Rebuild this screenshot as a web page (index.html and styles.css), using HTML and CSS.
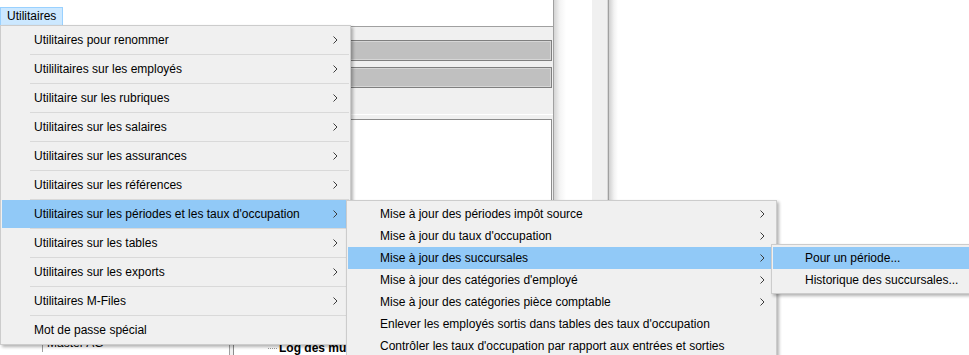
FILE: index.html
```html
<!DOCTYPE html>
<html lang="fr">
<head>
    <meta charset="UTF-8">
    <meta name="viewport" content="width=device-width, initial-scale=1.0">
    <title>Salaires - Utilitaires</title>
    <link rel="stylesheet" href="styles.css">
</head>
<body>
    <div class="app">
        <div class="main-pane">
            <div class="menubar">
                <span class="menubar-item active">Utilitaires</span>
            </div>
            <div class="workspace">
                <div class="company-list">
                    <div class="company-row">
                        <span class="col-code"></span>
                        <span class="col-name">Master AG</span>
                    </div>
                </div>
                <div class="details">
                    <div class="fields">
                        <div class="field"></div>
                        <div class="field"></div>
                    </div>
                    <div class="tree">
                        <div class="tree-node">Log des mutations</div>
                    </div>
                </div>
            </div>
        </div>
        <div class="splitter">
            <div class="splitter-gap"></div>
            <div class="splitter-track"></div>
        </div>
        <div class="right-pane"></div>
    </div>

    <!-- Menu Utilitaires -->
    <div class="menu menu-main">
        <div class="menu-item">Utilitaires pour renommer<svg class="chevron" width="5" height="8" viewBox="0 0 5 8"><path d="M0.5 0.5 L4 4 L0.5 7.5"/></svg></div>
        <div class="menu-sep"></div>
        <div class="menu-item">Utililitaires sur les employés<svg class="chevron" width="5" height="8" viewBox="0 0 5 8"><path d="M0.5 0.5 L4 4 L0.5 7.5"/></svg></div>
        <div class="menu-sep"></div>
        <div class="menu-item">Utilitaire sur les rubriques<svg class="chevron" width="5" height="8" viewBox="0 0 5 8"><path d="M0.5 0.5 L4 4 L0.5 7.5"/></svg></div>
        <div class="menu-sep"></div>
        <div class="menu-item">Utilitaires sur les salaires<svg class="chevron" width="5" height="8" viewBox="0 0 5 8"><path d="M0.5 0.5 L4 4 L0.5 7.5"/></svg></div>
        <div class="menu-sep"></div>
        <div class="menu-item">Utilitaires sur les assurances<svg class="chevron" width="5" height="8" viewBox="0 0 5 8"><path d="M0.5 0.5 L4 4 L0.5 7.5"/></svg></div>
        <div class="menu-sep"></div>
        <div class="menu-item">Utilitaires sur les références<svg class="chevron" width="5" height="8" viewBox="0 0 5 8"><path d="M0.5 0.5 L4 4 L0.5 7.5"/></svg></div>
        <div class="menu-sep"></div>
        <div class="menu-item selected">Utilitaires sur les périodes et les taux d'occupation<svg class="chevron" width="5" height="8" viewBox="0 0 5 8"><path d="M0.5 0.5 L4 4 L0.5 7.5"/></svg></div>
        <div class="menu-sep"></div>
        <div class="menu-item">Utilitaires sur les tables<svg class="chevron" width="5" height="8" viewBox="0 0 5 8"><path d="M0.5 0.5 L4 4 L0.5 7.5"/></svg></div>
        <div class="menu-sep"></div>
        <div class="menu-item">Utilitaires sur les exports<svg class="chevron" width="5" height="8" viewBox="0 0 5 8"><path d="M0.5 0.5 L4 4 L0.5 7.5"/></svg></div>
        <div class="menu-sep"></div>
        <div class="menu-item">Utilitaires M-Files<svg class="chevron" width="5" height="8" viewBox="0 0 5 8"><path d="M0.5 0.5 L4 4 L0.5 7.5"/></svg></div>
        <div class="menu-sep"></div>
        <div class="menu-item">Mot de passe spécial</div>
    </div>

    <!-- Sous-menu périodes et taux d'occupation -->
    <div class="menu menu-sub">
        <div class="menu-item">Mise à jour des périodes impôt source<svg class="chevron" width="5" height="8" viewBox="0 0 5 8"><path d="M0.5 0.5 L4 4 L0.5 7.5"/></svg></div>
        <div class="menu-item">Mise à jour du taux d'occupation<svg class="chevron" width="5" height="8" viewBox="0 0 5 8"><path d="M0.5 0.5 L4 4 L0.5 7.5"/></svg></div>
        <div class="menu-item selected">Mise à jour des succursales<svg class="chevron" width="5" height="8" viewBox="0 0 5 8"><path d="M0.5 0.5 L4 4 L0.5 7.5"/></svg></div>
        <div class="menu-item">Mise à jour des catégories d'employé<svg class="chevron" width="5" height="8" viewBox="0 0 5 8"><path d="M0.5 0.5 L4 4 L0.5 7.5"/></svg></div>
        <div class="menu-item">Mise à jour des catégories pièce comptable<svg class="chevron" width="5" height="8" viewBox="0 0 5 8"><path d="M0.5 0.5 L4 4 L0.5 7.5"/></svg></div>
        <div class="menu-item">Enlever les employés sortis dans tables des taux d'occupation</div>
        <div class="menu-item">Contrôler les taux d'occupation par rapport aux entrées et sorties</div>
    </div>

    <!-- Sous-menu succursales -->
    <div class="menu menu-sub2">
        <div class="menu-item selected">Pour un période...</div>
        <div class="menu-item">Historique des succursales...</div>
    </div>
</body>
</html>
```

FILE: styles.css
```css
body {
    margin: 0;
    width: 969px;
    height: 355px;
    overflow: hidden;
    position: relative;
    background-color: #fff;
    font-family: "Liberation Sans", Arial, sans-serif;
    font-size: 12px;
    color: #000;
}

/* fenêtre en arrière-plan */
.app {
    display: flex;
    height: 355px;
}
.main-pane {
    width: 553px;
    border-right: 1px solid #a0a0a0;
    display: flex;
    flex-direction: column;
}
.menubar {
    height: 20px;
    padding-top: 7px;
    border-bottom: 1px solid #a0a0a0;
    background-color: #fff;
}
.menubar-item {
    display: inline-block;
    height: 17px;
    line-height: 17px;
    padding: 0 6px;
    border: 1px solid transparent;
}
.menubar-item.active {
    background-color: #cce8ff;
    border-color: #99d1ff;
}
.workspace {
    flex: 1;
    display: flex;
}
.company-list {
    width: 229px;
    border-right: 1px solid #a0a0a0;
    background-color: #fff;
    display: flex;
    flex-direction: column;
    justify-content: flex-end;
    padding-bottom: 4px;
}
.company-row {
    display: flex;
    height: 17px;
    line-height: 17px;
}
.col-code {
    width: 42px;
    border-right: 1px solid #a0a0a0;
}
.col-name {
    padding-left: 4px;
}
.details {
    flex: 1;
    background-color: #f0f0f0;
    display: flex;
    flex-direction: column;
}
.fields {
    height: 74px;
    padding: 13px 1px 0 3px;
    border-bottom: 1px solid #fff;
    display: flex;
    flex-direction: column;
    gap: 6px;
}
.field {
    height: 19px;
    background-color: #c0c0c0;
    border: 1px solid #7f7f7f;
    box-shadow: inset 0 0 0 1px #d6d6d6;
}
.tree {
    flex: 1;
    margin: 4px 1px 0 3px;
    background-color: #fff;
    border: 1px solid #8c8c8c;
    border-bottom: none;
    padding-top: 220px;
}
.tree-node {
    display: flex;
    align-items: center;
    height: 16px;
    margin-left: 34px;
    font-weight: bold;
}
.tree-node::before {
    content: "";
    width: 9px;
    margin-right: 2px;
    border-top: 1px dotted #9a9a9a;
}
.splitter {
    display: flex;
    width: 54px;
    border-right: 1px solid #a0a0a0;
}
.splitter-gap {
    width: 38px;
    background: linear-gradient(to right, #d4d4d4, #f4f4f4 6px, #fff 12px);
}
.splitter-track {
    flex: 1;
    background-color: #f0f0f0;
    border-right: 1px solid #d8d8d8;
}
.right-pane {
    flex: 1;
    background: linear-gradient(to right, #d0d0d0, #f2f2f2 5px, #fff 9px);
}

/* menus déroulants */
.menu {
    position: absolute;
    box-sizing: border-box;
    background-color: #f0f0f0;
    border: 1px solid #cccccc;
    box-shadow: 2px 2px 3px rgba(0, 0, 0, 0.3);
}
.menu-item {
    display: flex;
    align-items: center;
    padding-left: 32px;
    white-space: nowrap;
}
.menu-item.selected {
    background-color: #91c9f7;
}
.chevron {
    margin-left: auto;
    fill: none;
    stroke: #3c3c3c;
    stroke-width: 1;
}
.menu-sep {
    height: 1px;
    margin-left: 28px;
    background-color: #d9d9d9;
}
.menu-main {
    left: 0;
    top: 25px;
    width: 351px;
    padding: 0 1px;
}
.menu-main .menu-item {
    height: 28px;
    padding-right: 11px;
}
.menu-sub {
    left: 346px;
    top: 200px;
    width: 431px;
    padding: 2px 1px;
}
.menu-sub .menu-item {
    height: 22px;
    padding-right: 10px;
}
.menu-sub2 {
    left: 771px;
    top: 244px;
    width: 240px;
    padding: 2px 1px;
}
.menu-sub2 .menu-item {
    height: 22px;
}
```
